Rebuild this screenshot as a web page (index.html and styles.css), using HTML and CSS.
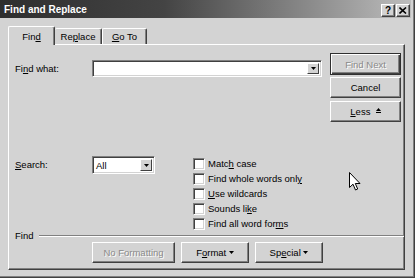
FILE: index.html
```html
<!DOCTYPE html>
<html>
<head>
<meta charset="utf-8">
<link rel="stylesheet" href="styles.css">
</head>
<body>
<div class="window">
  <div class="titlebar">
    <span class="title">Find and Replace</span>
    <div class="caption-btns">
      <span class="cbtn help">?</span>
      <span class="cbtn"><svg width="8" height="7" viewBox="0 0 8 7"><path d="M0.5 0.5 L7 6.5 M7 0.5 L0.5 6.5" stroke="#000" stroke-width="1.6" fill="none"/></svg></span>
    </div>
  </div>
  <div class="client">
    <div class="tabs">
      <div class="tab active">Fin<u>d</u></div>
      <div class="tab replace">Re<u>p</u>lace</div>
      <div class="tab goto"><u>G</u>o To</div>
    </div>
    <div class="panel">
      <div class="row-top">
        <div class="find-row">
          <span class="lbl">Fi<u>n</u>d what:</span>
          <div class="combo wide"><span class="combo-text"></span><span class="drop"><svg width="5" height="3" viewBox="0 0 5 3"><path d="M0 0H5L2.5 3Z" fill="#000"/></svg></span></div>
        </div>
        <div class="btn-col">
          <div class="btn default disabled">Find Next</div>
          <div class="btn">Cancel</div>
          <div class="btn"><u>L</u>ess&nbsp;&nbsp;<svg class="less-ic" width="5" height="6" viewBox="0 0 5 6"><path d="M2.5 0L5 3H0Z" fill="#000"/><rect x="0" y="4" width="5" height="1" fill="#000"/></svg></div>
        </div>
      </div>
      <div class="row-search">
        <span class="lbl"><u>S</u>earch:</span>
        <div class="combo narrow"><span class="combo-text">All</span><span class="drop"><svg width="5" height="3" viewBox="0 0 5 3"><path d="M0 0H5L2.5 3Z" fill="#000"/></svg></span></div>
        <div class="checks">
          <div class="chk"><span class="box"></span><span>Matc<u>h</u> case</span></div>
          <div class="chk"><span class="box"></span><span>Find whole words onl<u>y</u></span></div>
          <div class="chk"><span class="box"></span><span><u>U</u>se wildcards</span></div>
          <div class="chk"><span class="box"></span><span>Sounds li<u>k</u>e</span></div>
          <div class="chk"><span class="box"></span><span>Find all word for<u>m</u>s</span></div>
        </div>
      </div>
      <div class="group"><span class="group-lbl">Find</span><span class="etch"></span></div>
      <div class="row-bottom">
        <div class="btn disabled nf">No Formatting</div>
        <div class="btn fm">F<u>o</u>rmat&nbsp;<svg width="5" height="3" viewBox="0 0 5 3"><path d="M0 0H5L2.5 3Z" fill="#000"/></svg></div>
        <div class="btn fm">Sp<u>e</u>cial&nbsp;<svg width="5" height="3" viewBox="0 0 5 3"><path d="M0 0H5L2.5 3Z" fill="#000"/></svg></div>
      </div>
    </div>
  </div>
  <svg class="cursor" width="12" height="19" viewBox="0 0 12 19"><path d="M0.5 0.5 L0.5 15.5 L4 12.2 L6.5 18 L8.7 17 L6.3 11.5 L11 11.5 Z" fill="#fff" stroke="#000" stroke-width="1"/></svg>
</div>
</body>
</html>
```

FILE: styles.css
```css
* { box-sizing: border-box; }
html, body { margin: 0; padding: 0; }
body {
  font-family: "Liberation Sans", Arial, sans-serif;
  font-size: 9.5px;
  color: #000;
  background: #d3d3d3;
  width: 415px;
  height: 278px;
  overflow: hidden;
}
u { text-decoration-thickness: 1px; text-underline-offset: 1px; }

.window {
  position: relative;
  width: 415px;
  height: 278px;
  background: #d3d3d3;
  border-right: 1px solid #404040;
  border-bottom: 1px solid #404040;
  box-shadow: inset -1px -1px #808080;
  padding: 0 3px 3px 0;
  display: flex;
  flex-direction: column;
}

.titlebar {
  flex: none;
  height: 18px;
  background: linear-gradient(to right, #2e2e2e 0%, #444 40%, #8a8a8a 75%, #bdbdbd 100%);
  display: flex;
  align-items: flex-start;
  justify-content: space-between;
}
.title {
  color: #fff;
  font-weight: bold;
  font-size: 10px;
  line-height: 14px;
  margin: 3px 0 0 4px;
}
.caption-btns { display: flex; gap: 1px; margin: 4px 1px 0 0; }
.cbtn {
  width: 14px;
  height: 13px;
  background: #d3d3d3;
  border-top: 1px solid #fff;
  border-left: 1px solid #fff;
  border-right: 1px solid #404040;
  border-bottom: 1px solid #404040;
  box-shadow: inset -1px -1px #808080;
  display: flex;
  align-items: center;
  justify-content: center;
  font-weight: bold;
  font-size: 10px;
  line-height: 1;
}

.client { flex: 1; padding: 8px 0 0 8px; }

.tabs {
  display: flex;
  align-items: flex-end;
  height: 19px;
  margin-bottom: -1px;
}
.tab {
  height: 16px;
  margin-bottom: 1px;
  line-height: 15px;
  text-align: center;
  background: #d3d3d3;
  border-top: 1px solid #fff;
  border-left: 1px solid #fff;
  border-right: 1px solid #404040;
  border-radius: 2px 2px 0 0;
  box-shadow: inset -1px 0 #808080;
}
.tab.active {
  position: relative;
  z-index: 1;
  width: 47px;
  height: 19px;
  margin-bottom: 0;
  padding-top: 2px;
}
.tab.replace { width: 47px; border-left: none; }
.tab.goto { width: 45px; }

.panel {
  width: 397px;
  height: 226px;
  border-top: 1px solid #fff;
  border-left: 1px solid #fff;
  border-right: 1px solid #404040;
  border-bottom: 1px solid #404040;
  box-shadow: inset -1px -1px #808080;
  padding: 8px 0 0 6px;
}

.lbl { width: 77px; flex: none; }

.row-top { display: flex; align-items: flex-start; }
.find-row { display: flex; align-items: center; margin-top: 7px; }

.combo {
  height: 17px;
  background: #fff;
  border-top: 1px solid #808080;
  border-left: 1px solid #808080;
  border-right: 1px solid #fff;
  border-bottom: 1px solid #fff;
  box-shadow: inset 1px 1px #404040, inset -1px -1px #d3d3d3;
  display: flex;
  align-items: stretch;
  padding: 2px;
}
.combo.wide { width: 230px; }
.combo.narrow { width: 63px; height: 18px; }
.combo-text { flex: 1; line-height: 13px; padding-left: 1px; }
.drop {
  width: 12px;
  background: #d3d3d3;
  border-top: 1px solid #fff;
  border-left: 1px solid #fff;
  border-right: 1px solid #404040;
  border-bottom: 1px solid #404040;
  display: flex;
  align-items: center;
  justify-content: center;
}

.btn-col {
  display: flex;
  flex-direction: column;
  gap: 2px;
  margin-left: 8px;
  width: 71px;
}
.btn {
  height: 21px;
  background: #d3d3d3;
  border-top: 1px solid #fff;
  border-left: 1px solid #fff;
  border-right: 1px solid #404040;
  border-bottom: 1px solid #404040;
  box-shadow: inset -1px -1px #808080;
  display: flex;
  align-items: center;
  justify-content: center;
  white-space: nowrap;
}
.btn-col .btn + .btn + .btn { margin-top: 1px; }
.btn.default {
  height: 22px;
  border: 1px solid #303030;
  box-shadow: inset 1px 1px #fff, inset -1px -1px #404040, inset -2px -2px #808080;
}
.btn.disabled { color: #8a8a8a; text-shadow: 1px 1px #fff; }
.less-ic { margin-top: -1px; }

.row-search { display: flex; align-items: flex-start; margin-top: 34px; }
.row-search .lbl { line-height: 18px; }
.checks { margin-left: 38px; display: flex; flex-direction: column; }
.chk { display: flex; align-items: center; height: 15px; }
.box {
  width: 12px;
  height: 12px;
  background: #fff;
  border-top: 1px solid #808080;
  border-left: 1px solid #808080;
  border-right: 1px solid #fff;
  border-bottom: 1px solid #fff;
  box-shadow: inset 1px 1px #404040, inset -1px -1px #d3d3d3;
  margin-right: 3px;
  flex: none;
}

.group { display: flex; align-items: center; height: 12px; margin-top: -1px; }
.group-lbl { line-height: 12px; }
.etch {
  flex: none;
  width: 365px;
  margin-left: 6px;
  height: 2px;
  border-top: 1px solid #808080;
  border-bottom: 1px solid #fff;
}

.row-bottom { display: flex; gap: 6px; padding-left: 77px; margin-top: 0; }
.row-bottom .nf { width: 83px; }
.row-bottom .fm { width: 68px; }

.cursor { position: absolute; left: 349px; top: 172px; }
```
